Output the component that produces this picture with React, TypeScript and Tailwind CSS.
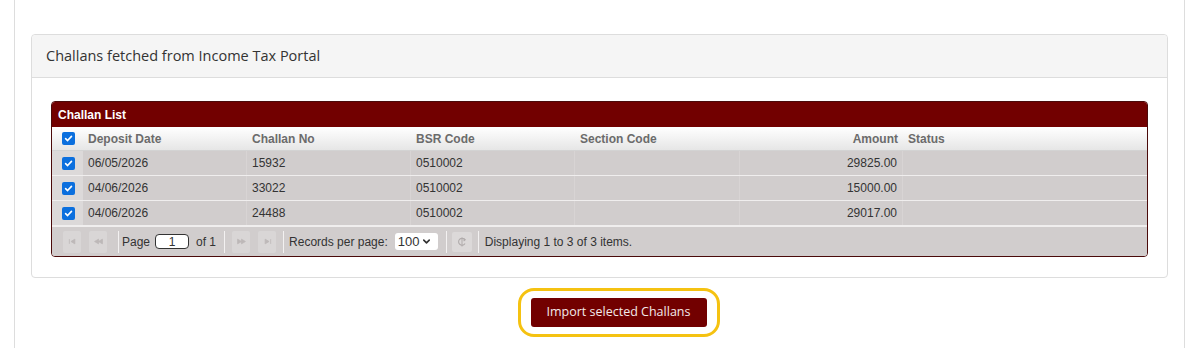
import { ChevronDown } from "lucide-react";

const rows = [
  { date: "06/05/2026", challan: "15932", bsr: "0510002", section: "", amount: "29825.00", status: "" },
  { date: "04/06/2026", challan: "33022", bsr: "0510002", section: "", amount: "15000.00", status: "" },
  { date: "04/06/2026", challan: "24488", bsr: "0510002", section: "", amount: "29017.00", status: "" },
];

function Check() {
  return (
    <span className="flex h-[13px] w-[13px] items-center justify-center rounded-[2px] bg-[#0b6fde]">
      <svg width="9" height="9" viewBox="0 0 10 10">
        <path d="M1.8 5.2 L4 7.3 L8.3 2.6" fill="none" stroke="white" strokeWidth="1.8" strokeLinecap="round" strokeLinejoin="round" />
      </svg>
    </span>
  );
}

function PagerIcon({ kind }: { kind: "first" | "prev" | "next" | "last" }) {
  const paths: Record<string, string> = {
    first: "M3 4 V10 M10 4 L5 7 L10 10 Z",
    prev: "M7 4 L2 7 L7 10 Z M12 4 L7 7 L12 10 Z",
    next: "M2 4 L7 7 L2 10 Z M7 4 L12 7 L7 10 Z",
    last: "M4 4 L9 7 L4 10 Z M11 4 V10",
  };
  return (
    <span className="flex h-[22px] w-[18px] items-center justify-center rounded-[2px] bg-[#d9d6d6]">
      <svg width="11" height="11" viewBox="0 0 14 14">
        <path d={paths[kind]} fill="#bdb8b8" stroke="#bdb8b8" strokeWidth="1" />
      </svg>
    </span>
  );
}

function Sep() {
  return <span className="h-[22px] w-px bg-[#f3f1f1]" />;
}

export default function App() {
  return (
    <div className="min-h-[348px] bg-white font-['Open_Sans',sans-serif]">
      <div className="mx-[14px] mr-[16px] min-h-[348px] border-x border-[#dddddd] px-4 pt-[34px]">
        {/* Panel */}
        <div className="rounded-[4px] border border-[#dddddd] bg-white">
          <div className="flex h-[43px] items-center rounded-t-[4px] border-b border-[#dddddd] bg-[#f5f5f5] px-[14px] text-[14.5px] text-[#333333]">
            Challans fetched from Income Tax Portal
          </div>
          <div className="px-[19px] pt-[23px] pb-[20px]">
            {/* Grid */}
            <div className="overflow-hidden rounded-[4px] border border-[#4a0a0a] font-['Liberation_Sans',Arial,sans-serif] text-[12px]">
              <div className="flex h-[25px] items-center bg-[#720000] px-[6px] font-bold text-white">
                Challan List
              </div>
              <div className="flex h-[24px] items-center border-b border-[#d3d3d3] bg-gradient-to-b from-[#ffffff] to-[#e6e6e6] font-bold text-[#6b6b6b]">
                <div className="flex w-[31px] justify-center pl-[2px]">
                  <Check />
                </div>
                <div className="w-[164px] px-[5px]">Deposit Date</div>
                <div className="w-[164px] px-[5px]">Challan No</div>
                <div className="w-[164px] px-[5px]">BSR Code</div>
                <div className="w-[165px] px-[5px]">Section Code</div>
                <div className="w-[163px] px-[5px] text-right">Amount</div>
                <div className="px-[5px]">Status</div>
              </div>
              {rows.map((r, i) => (
                <div key={i} className="flex h-[25px] items-stretch border-b border-[#f0eeee] bg-[#d1cdcd] text-[#333333]">
                  <div className="flex w-[31px] items-center justify-center bg-[#dcd9d9] pl-[2px]">
                    <Check />
                  </div>
                  <div className="flex w-[164px] items-center border-r border-[#d8d4d4] px-[5px]">{r.date}</div>
                  <div className="flex w-[164px] items-center border-r border-[#d8d4d4] px-[5px]">{r.challan}</div>
                  <div className="flex w-[164px] items-center border-r border-[#d8d4d4] px-[5px]">{r.bsr}</div>
                  <div className="flex w-[165px] items-center border-r border-[#d8d4d4] px-[5px]">{r.section}</div>
                  <div className="flex w-[163px] items-center justify-end border-r border-[#d8d4d4] px-[5px]">{r.amount}</div>
                  <div className="flex items-center px-[5px]">{r.status}</div>
                </div>
              ))}
              <div className="flex h-[30px] items-center border-t border-[#f0eeee] bg-[#d1cdcd] pl-[11px] text-[#333333]">
                <PagerIcon kind="first" />
                <span className="w-[8px]" />
                <PagerIcon kind="prev" />
                <span className="w-[11px]" />
                <Sep />
                <span className="ml-[3px]">Page</span>
                <span className="ml-[5px] flex h-[15px] w-[34px] items-center justify-center rounded-[4px] border border-[#333333] bg-white">
                  1
                </span>
                <span className="ml-[7px]">of 1</span>
                <span className="w-[8px]" />
                <Sep />
                <span className="w-[7px]" />
                <PagerIcon kind="next" />
                <span className="w-[8px]" />
                <PagerIcon kind="last" />
                <span className="w-[7px]" />
                <Sep />
                <span className="ml-[5px]">Records per page:</span>
                <span className="ml-[7px] flex h-[17px] w-[43px] items-center rounded-[3px] bg-white pl-[3px] text-[13px]">
                  100
                  <ChevronDown className="ml-[2px] h-[11px] w-[11px]" strokeWidth={3.5} color="#333333" />
                </span>
                <span className="w-[8px]" />
                <Sep />
                <span className="ml-[5px] flex h-[20px] w-[20px] items-center justify-center rounded-[2px] bg-[#dcd9d9]">
                  <svg width="12" height="12" viewBox="0 0 12 12">
                    <path d="M8.6 3.6 A3.4 3.4 0 1 0 9 7.4" fill="none" stroke="#b0abab" strokeWidth="1.1" />
                    <path d="M7.6 2.4 L9.2 3.8 L7.6 5" fill="none" stroke="#b0abab" strokeWidth="1.1" />
                    <path d="M6 1.5 V10.5" stroke="#b0abab" strokeWidth="1" />
                  </svg>
                </span>
                <span className="w-[6px]" />
                <Sep />
                <span className="ml-[6px]">Displaying 1 to 3 of 3 items.</span>
              </div>
            </div>
          </div>
        </div>

        {/* Action */}
        <div className="mt-[10px] flex justify-center pl-[38px]">
          <div className="rounded-[16px] border-[3px] border-[#f5c211] px-[10px] py-[7px]">
            <button className="h-[29px] w-[176px] rounded-[3px] bg-[#720000] text-[12.5px] text-[#f4eaea]">
              Import selected Challans
            </button>
          </div>
        </div>
      </div>
    </div>
  );
}
